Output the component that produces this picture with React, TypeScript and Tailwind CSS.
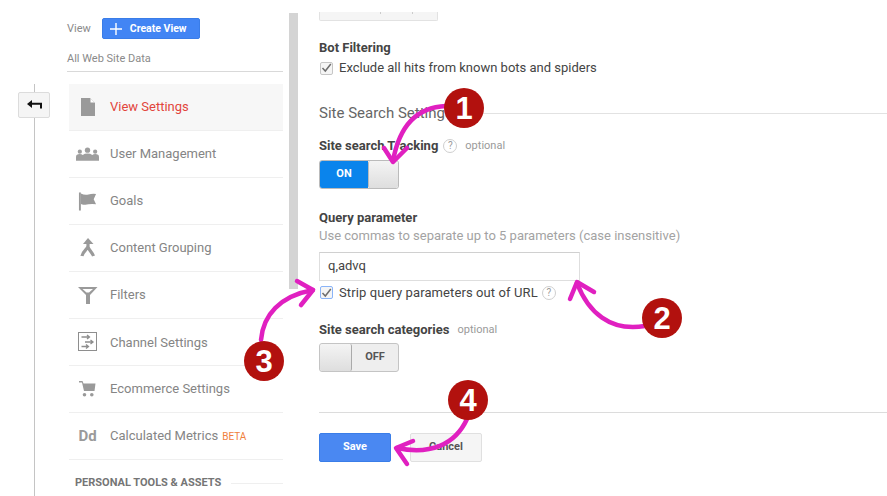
const font = "font-['Roboto',sans-serif]";

function Doc() {
  return (
    <svg width="16" height="20" viewBox="0 0 16 20" className="block">
      <path d="M1 1h9l5 5v13H1z" fill="#9a9a9a" />
      <path d="M10.500 1.500l4 4h-4z" fill="#fff" />
    </svg>
  );
}
function Users() {
  return (
    <svg width="23" height="15" viewBox="0 0 24 15" className="block" fill="#9e9e9e">
      <circle cx="4" cy="4.500" r="2.200" />
      <circle cx="12" cy="3" r="2.800" />
      <circle cx="20" cy="4.500" r="2.200" />
      <path d="M0 14v-4q0-3 4-3 2 0 3 1 2-1.500 5-1.500t5 1.500q1-1 3-1 4 0 4 3v4z" />
    </svg>
  );
}
function Flag() {
  return (
    <svg width="19" height="19" viewBox="0 0 20 20" className="block" fill="#9a9a9a">
      <rect x="1" y="0.500" width="2" height="19" />
      <path d="M3 1.500q4 2 8 1t8-.5l-2.500 5.500 2.500 5.500q-4-1-8 0t-8-.5z" />
    </svg>
  );
}
function Merge() {
  return (
    <svg width="16" height="20" viewBox="0 0 16 20" className="block">
      <path d="M8 0l5.500 6H3z" fill="#9a9a9a" />
      <path d="M8 5v3c0 3-5 5-6 10M8 9c1 3 4 5 5.500 9" fill="none" stroke="#9a9a9a" strokeWidth="3.200" />
    </svg>
  );
}
function Funnel() {
  return (
    <svg width="20" height="17" viewBox="0 0 20 17" className="block" fill="#9a9a9a">
      <path d="M0 0h19.500l-7.500 8v9h-4v-9zM4.500 2l4 3.500h2.500l4-3.500z" fillRule="evenodd" />
    </svg>
  );
}
function Channel() {
  return (
    <svg width="20" height="20" viewBox="0 0 20 20" className="block" fill="none" stroke="#8e8e8e">
      <rect x="0.500" y="0.500" width="18" height="18" />
      <path d="M3.500 5h8M9 3l2.500 2L9 7M7 10h8M12.500 8l2.500 2-2.500 2M3.500 14.500h7M8 12.500l2.500 2-2.500 2" strokeWidth="1.300" />
    </svg>
  );
}
function Cart() {
  return (
    <svg width="17" height="16" viewBox="0 0 17 16" className="block" fill="#9a9a9a">
      <path d="M0 0h3.500l1 2.500H16.500l-1 7.500H5L3 1.500H0z" />
      <circle cx="5.500" cy="13.800" r="1.800" />
      <circle cx="12.800" cy="13.800" r="1.800" />
    </svg>
  );
}

const items = [
  { label: "View Settings", icon: <Doc />, active: true },
  { label: "User Management", icon: <Users /> },
  { label: "Goals", icon: <Flag /> },
  { label: "Content Grouping", icon: <Merge /> },
  { label: "Filters", icon: <Funnel /> },
  { label: "Channel Settings", icon: <Channel /> },
  { label: "Ecommerce Settings", icon: <Cart /> },
  {
    label: "Calculated Metrics",
    icon: <span className="text-[15px] font-bold text-[#9a9a9a] leading-none">Dd</span>,
    beta: true,
  },
];

function Help() {
  return (
    <span className="flex h-[14px] w-[14px] items-center justify-center rounded-full border border-[#cfcfcf] text-[10px] leading-none text-[#9a9a9a]">
      ?
    </span>
  );
}

function Check({ focus }: { focus?: boolean }) {
  return (
    <span
      className={`ml-px flex h-[13px] w-[13px] items-center justify-center rounded-[2px] border bg-[#f5f5f5] ${
        focus ? "border-[#8ab4f8]" : "border-[#c6c6c6]"
      }`}
    >
      <svg width="11" height="10" viewBox="0 0 11 10" fill="none" stroke="#6e6e6e" strokeWidth="1.500">
        <path d="M1.500 5l2.800 3L9.800 1" />
      </svg>
    </span>
  );
}

function Badge({ n, className }: { n: string; className: string }) {
  return (
    <div
      className={`absolute flex h-10 w-10 items-center justify-center rounded-full bg-[#b2110e] text-[31px] font-bold leading-none text-white font-['Liberation_Sans',sans-serif] ${className}`}
    >
      {n}
    </div>
  );
}

export default function App() {
  return (
    <div className={`relative flex h-[496px] w-[887px] overflow-hidden bg-white ${font}`}>
      {/* back rail */}
      <div className="relative ml-[18px] mt-[84px] w-[33px] shrink-0">
        <div className="absolute bottom-0 left-[16px] top-0 w-px bg-[#c4c4c4]" />
        <div className="relative mt-2 flex h-[26px] w-[32px] items-center justify-center rounded-[2px] border border-[#dcdcdc] bg-[#f5f5f5]">
          <svg width="15" height="10" viewBox="0 0 15 10" fill="#111">
            <path d="M0 4L5 0v2.700h10V8.500h-2V4.700H5V8z" />
          </svg>
        </div>
      </div>

      {/* sidebar */}
      <div className="ml-[16px] w-[216px] shrink-0">
        <div className="flex h-[71.500px] flex-col border-b border-[#d9d9d9] pt-[18px]">
          <div className="flex h-[21px] items-center">
            <span className="mt-[1px] text-[11px] text-[#8a8a8a]">View</span>
            <span className="ml-[11px] flex h-[21px] w-[98px] items-center rounded-[2px] border border-[#3a7de8] bg-[#4285f4] pl-[7px] text-[10.500px] font-bold text-white">
              <svg width="12" height="12" viewBox="0 0 12 12" stroke="#fff" strokeWidth="1.400">
                <path d="M6 0v12M0 6h12" />
              </svg>
              <span className="ml-[8px]">Create View</span>
            </span>
          </div>
          <div className="mt-[11px] text-[11px] leading-[18px] text-[#8a8a8a]">All Web Site Data</div>
        </div>
        <div className="ml-[2px] mt-[12.500px]">
          {items.map((it, i) => (
            <div
              key={it.label}
              className={`flex h-[47px] items-center border-b border-[#efefef] ${it.active ? "bg-[#f7f7f7]" : ""}`}
            >
              <div className="flex w-[41px] shrink-0 justify-center pr-[4px]">{it.icon}</div>
              <span className={`text-[13px] ${it.active ? "text-[#e2453c]" : "text-[#858585]"} ${i === 5 ? "mt-[2px]" : ""}`}>{it.label}</span>
              {it.beta && <span className="ml-[4px] mt-[1px] text-[10px] text-[#f0803c]">BETA</span>}
            </div>
          ))}
          <div className="-ml-[2px] mt-[15px] flex items-center pl-[8px]">
            <span className="text-[11px] font-bold text-[#757575]">PERSONAL TOOLS &amp; ASSETS</span>
            <span className="ml-[10px] h-px flex-1 bg-[#efefef]" />
          </div>
        </div>
      </div>

      {/* scrollbar */}
      <div className="ml-[6px] mt-[13px] h-[276px] w-[9px] shrink-0 bg-[#d4d4d4]" />

      {/* main */}
      <div className="ml-[21px] flex-1 pt-[12px]">
        <div className="relative h-[9px] w-[119px] rounded-b-[2px] border border-t-0 border-[#e2e2e2] bg-[#f5f5f5]">
          <span className="absolute left-[60px] top-0 h-[2px] w-px bg-[#ccc]" />
          <span className="absolute left-[92px] top-0 h-[2px] w-px bg-[#ccc]" />
        </div>
        <div className="mt-[19px] text-[13px] font-bold leading-[16px] text-[#444]">Bot Filtering</div>
        <div className="mt-[4px] flex items-center">
          <Check />
          <span className="ml-[6px] text-[13px] leading-[16px] text-[#444]">Exclude all hits from known bots and spiders</span>
        </div>
        <div className="mt-[27px] flex items-center">
          <span className="text-[15px] leading-[20px] text-[#666]">Site Search Settings</span>
          <span className="ml-[10px] h-px flex-1 bg-[#e2e2e2]" />
        </div>
        <div className="mt-[15px] flex items-center">
          <span className="text-[13px] font-bold leading-[16px] text-[#444]">Site search Tracking</span>
          <span className="ml-[5px]"><Help /></span>
          <span className="ml-[8px] text-[11px] text-[#9a9a9a]">optional</span>
        </div>
        <div className="mt-[5px] flex h-[29px] w-[80px] overflow-hidden rounded-[3px] border border-[#bbb]">
          <div className="flex w-[48px] items-center justify-center bg-[#0a84ec] text-[11px] font-bold text-white">ON</div>
          <div className="flex-1 rounded-[2px] border-l border-[#bbb] bg-gradient-to-b from-[#f4f4f4] to-[#dedede]" />
        </div>
        <div className="mt-[21px] text-[13px] font-bold leading-[16px] text-[#444]">Query parameter</div>
        <div className="mt-[2px] text-[13px] leading-[16px] text-[#a3a3a3]">Use commas to separate up to 5 parameters (case insensitive)</div>
        <div className="mt-[8px] flex h-[29px] w-[261px] items-center border border-[#dedede] border-t-[#d0d0d0] pl-[8px] text-[13px] text-[#444]">q,advq</div>
        <div className="mt-[4px] flex items-center">
          <Check focus />
          <span className="ml-[6px] text-[13px] leading-[16px] tracking-[0.1px] text-[#444]">Strip query parameters out of URL</span>
          <span className="ml-[4px]"><Help /></span>
        </div>
        <div className="mt-[21px] flex items-center">
          <span className="text-[13px] font-bold leading-[16px] text-[#444]">Site search categories</span>
          <span className="ml-[8px] text-[11px] text-[#9a9a9a]">optional</span>
        </div>
        <div className="mt-[5px] flex h-[29px] w-[80px] overflow-hidden rounded-[3px] border border-[#c4c4c4] bg-[#eee]">
          <div className="w-[32px] rounded-[2px] border-r border-[#aaa] bg-gradient-to-b from-[#f4f4f4] to-[#dedede]" />
          <div className="flex flex-1 items-center justify-center text-[11px] font-bold text-[#555]">OFF</div>
        </div>
        <div className="mt-[40px] h-px bg-[#dcdcdc]" />
        <div className="mt-[20px] flex gap-[19px]">
          <div className="flex h-[29px] w-[72px] items-center justify-center rounded-[2px] border border-[#3a7de8] bg-[#4a88f2] text-[11px] font-bold text-white">Save</div>
          <div className="flex h-[29px] w-[72px] items-center justify-center rounded-[2px] border border-[#e0e0e0] bg-[#f5f5f5] text-[11px] font-bold text-[#555]">Cancel</div>
        </div>
      </div>

      {/* annotations */}
      <svg width="887" height="496" viewBox="0 0 887 496" fill="none" stroke="#e020c0" strokeWidth="4.500" strokeLinecap="round" strokeLinejoin="round" className="pointer-events-none absolute left-0 top-0">
        <path d="M446 106C420 107 400 122 393 161" />
        <path d="M384 148L393 162L407 148" />
        <path d="M645 326C610 332 588 312 577 283" />
        <path d="M570 299L577 282L594 292" />
        <path d="M261 340C263 315 280 296 313 290" />
        <path d="M297 281L313 290L301 305" />
        <path d="M467 419C455 445 430 455 397 448" />
        <path d="M413 441L396 448L407 464" />
      </svg>
      <Badge n="1" className="left-[444px] top-[88px]" />
      <Badge n="2" className="left-[642px] top-[298px]" />
      <Badge n="3" className="left-[244px] top-[341px]" />
      <Badge n="4" className="left-[448px] top-[380px]" />
    </div>
  );
}
